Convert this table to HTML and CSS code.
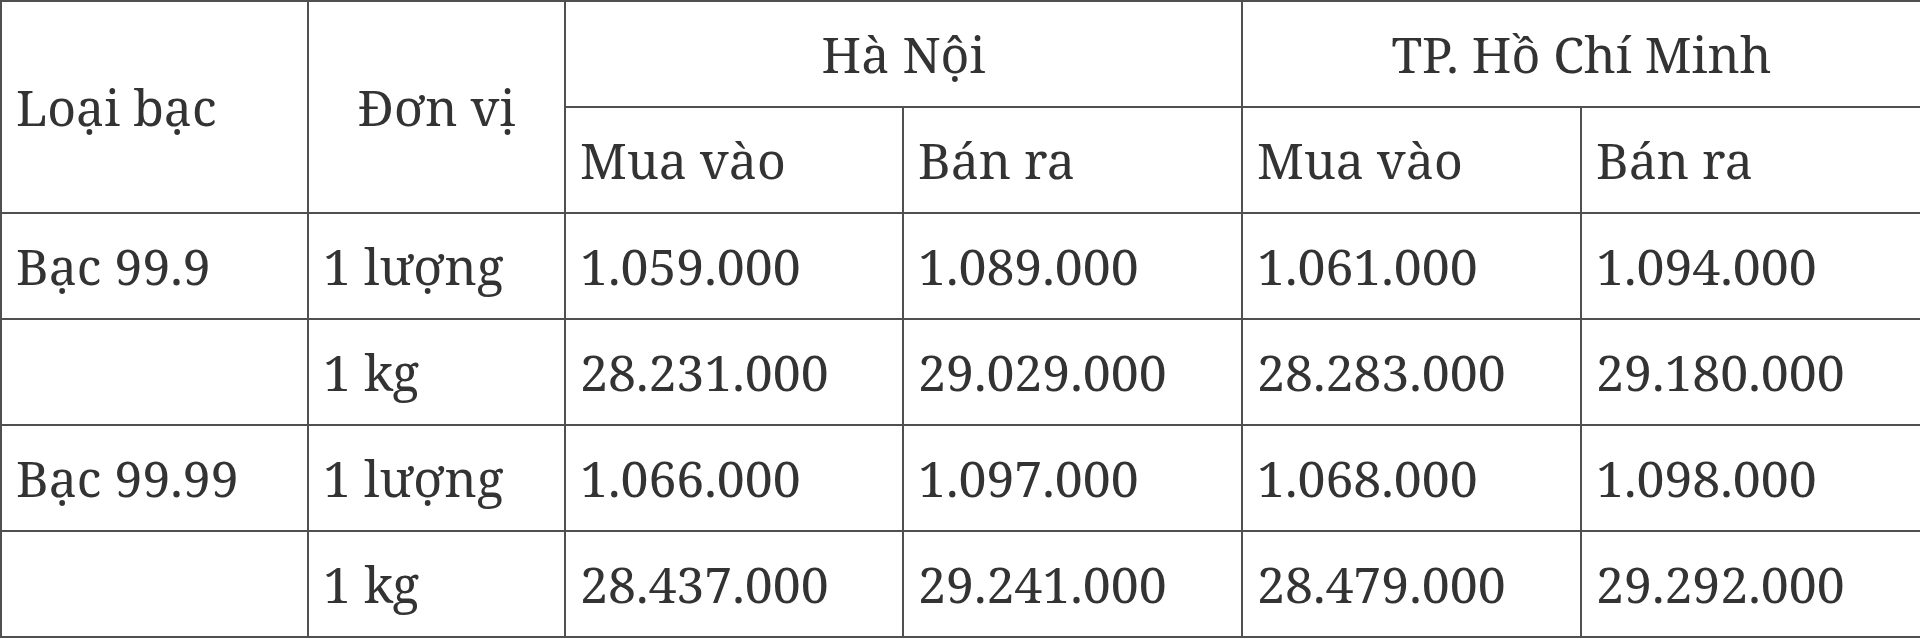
FILE: index.html
```html
<!DOCTYPE html>
<html lang="vi">
<head>
<meta charset="utf-8">
<title>Giá bạc</title>
<link rel="stylesheet" href="styles.css">
</head>
<body>
<table class="price-table">
  <colgroup>
    <col class="c1"><col class="c2"><col class="c3"><col class="c4"><col class="c5"><col class="c6">
  </colgroup>
  <thead>
    <tr>
      <th rowspan="2" class="left">Loại bạc</th>
      <th rowspan="2" class="center">Đơn vị</th>
      <th colspan="2" class="center">Hà Nội</th>
      <th colspan="2" class="center">TP. Hồ Chí Minh</th>
    </tr>
    <tr>
      <th class="left">Mua vào</th>
      <th class="left">Bán ra</th>
      <th class="left">Mua vào</th>
      <th class="left">Bán ra</th>
    </tr>
  </thead>
  <tbody>
    <tr><td>Bạc 99.9</td><td>1 lượng</td><td>1.059.000</td><td>1.089.000</td><td>1.061.000</td><td>1.094.000</td></tr>
    <tr><td></td><td>1 kg</td><td>28.231.000</td><td>29.029.000</td><td>28.283.000</td><td>29.180.000</td></tr>
    <tr><td>Bạc 99.99</td><td>1 lượng</td><td>1.066.000</td><td>1.097.000</td><td>1.068.000</td><td>1.098.000</td></tr>
    <tr><td></td><td>1 kg</td><td>28.437.000</td><td>29.241.000</td><td>28.479.000</td><td>29.292.000</td></tr>
  </tbody>
</table>
</body>
</html>
```
FILE: styles.css
```css
html, body {
  margin: 0;
  padding: 0;
  background: #ffffff;
}
.price-table {
  width: 1920px;
  border-collapse: collapse;
  table-layout: fixed;
  font-family: "Noto Serif", "DejaVu Serif Condensed", "DejaVu Serif", serif;
  font-size: 50px;
  color: #333333;
}
.c1 { width: 307px; }
.c2 { width: 257px; }
.c3 { width: 338px; }
.c4 { width: 339px; }
.c5 { width: 339px; }
.c6 { width: 340px; }
.price-table th,
.price-table td {
  border: 2px solid #505050;
  padding: 0 0 0 14px;
  height: 106px;
  box-sizing: border-box;
  font-weight: normal;
  text-align: left;
  vertical-align: middle;
  white-space: nowrap;
  line-height: 1.2;
}
.price-table th.center {
  text-align: center;
  padding: 0;
}
```
